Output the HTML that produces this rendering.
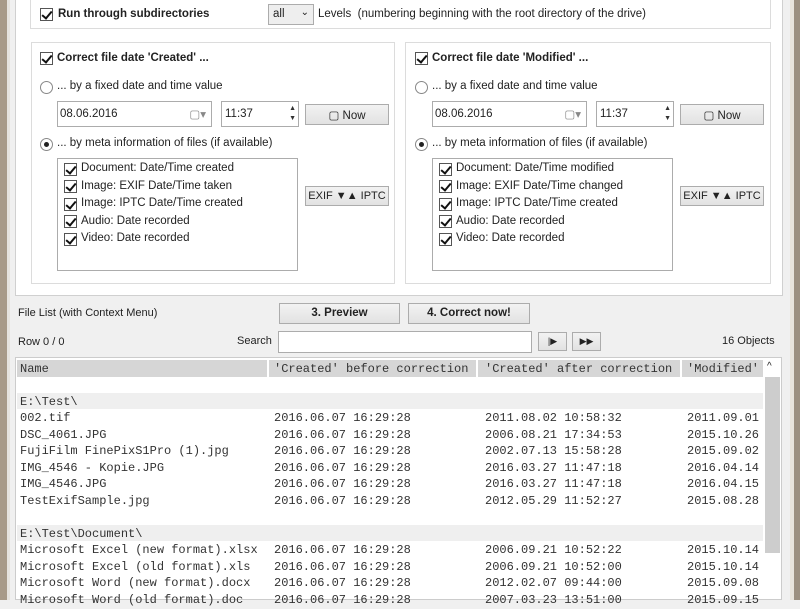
<!DOCTYPE html>
<html><head><meta charset="utf-8"><style>
*{box-sizing:border-box;margin:0;padding:0}
body{width:800px;height:600px;overflow:hidden;background:#f0f0f0;font-family:"Liberation Sans",sans-serif;font-size:11.5px;color:#222;position:relative}
.a{position:absolute;white-space:nowrap}
.box{position:absolute;border:1px solid #dcdcdc;background:#fff}
.cb{position:absolute;width:13px;height:13px;border:1px solid #555;background:#fff}
.cb:after{content:"";position:absolute;left:3px;top:0px;width:4px;height:8px;border:solid #111;border-width:0 2px 2px 0;transform:rotate(40deg)}
.rb{position:absolute;width:13px;height:13px;border:1px solid #888;border-radius:50%;background:#fff}
.rb.on:after{content:"";position:absolute;left:3px;top:3px;width:5px;height:5px;border-radius:50%;background:#222}
.in{position:absolute;border:1px solid #acacac;background:#fff;padding:4px 3px;font-size:11.5px;white-space:nowrap}
.btn{position:absolute;border:1px solid #acacac;background:linear-gradient(#f2f2f2,#e2e2e2);text-align:center;font-size:11.5px;white-space:nowrap}
.b{font-weight:bold}
.mono{font-family:"Liberation Mono",monospace;font-size:12px;color:#333}
.row{position:absolute;left:20px;height:16px;white-space:pre}
.row span{position:absolute;top:0}
</style></head><body>
<div class="a" style="left:0;top:0;width:7px;height:600px;background:#a89a88"></div>
<div class="a" style="left:7px;top:0;width:3px;height:600px;background:#e6e3de"></div>
<div class="a" style="left:790px;top:0;width:4px;height:600px;background:#e8e4dc"></div>
<div class="a" style="left:794px;top:0;width:6px;height:600px;background:#9c9080"></div>

<div class="box" style="left:15px;top:-2px;width:768px;height:298px;border-color:#d0d0d0"></div>
<div class="box" style="left:30px;top:-2px;width:741px;height:31px"></div>
<div class="cb" style="left:40px;top:8px"></div>
<div class="a b" style="left:58px;top:8px">Run through subdirectories</div>
<div class="in" style="left:268px;top:4px;width:46px;height:21px;background:#eee;padding:3px 4px">all<span style="position:absolute;right:4px;top:2px;font-size:10px">⌄</span></div>
<div class="a" style="left:318px;top:8px">Levels&nbsp; (numbering beginning with the root directory of the drive)</div>

<!-- left group -->
<div class="box" style="left:31px;top:42px;width:364px;height:242px"></div>
<div class="cb" style="left:40px;top:52px"></div>
<div class="a b" style="left:57px;top:52px">Correct file date 'Created' ...</div>
<div class="rb" style="left:40px;top:81px"></div>
<div class="a" style="left:57px;top:80px">... by a fixed date and time value</div>
<div class="in" style="left:57px;top:101px;width:155px;height:26px;padding:6px 2px">08.06.2016<span style="position:absolute;right:5px;top:5px;color:#888">▢▾</span></div>
<div class="in" style="left:221px;top:101px;width:78px;height:26px;padding:6px 3px">11:37<span style="position:absolute;right:2px;top:2px;font-size:7px;line-height:10px;color:#333">▲<br>▼</span></div>
<div class="btn" style="left:305px;top:104px;width:84px;height:21px;padding-top:3px">▢ Now</div>
<div class="rb on" style="left:40px;top:138px"></div>
<div class="a" style="left:57px;top:137px">... by meta information of files (if available)</div>
<div class="in" style="left:57px;top:158px;width:241px;height:113px;padding:0"></div>
<div class="cb" style="left:64px;top:163px"></div><div class="a" style="left:81px;top:162px">Document: Date/Time created</div>
<div class="cb" style="left:64px;top:180px"></div><div class="a" style="left:81px;top:180px">Image: EXIF Date/Time taken</div>
<div class="cb" style="left:64px;top:198px"></div><div class="a" style="left:81px;top:197px">Image: IPTC Date/Time created</div>
<div class="cb" style="left:64px;top:215px"></div><div class="a" style="left:81px;top:215px">Audio: Date recorded</div>
<div class="cb" style="left:64px;top:233px"></div><div class="a" style="left:81px;top:232px">Video: Date recorded</div>
<div class="btn" style="left:305px;top:186px;width:84px;height:20px;padding-top:3px;font-size:11px">EXIF ▼▲ IPTC</div>

<!-- right group -->
<div class="box" style="left:405px;top:42px;width:366px;height:242px"></div>
<div class="cb" style="left:415px;top:52px"></div>
<div class="a b" style="left:432px;top:52px">Correct file date 'Modified' ...</div>
<div class="rb" style="left:415px;top:81px"></div>
<div class="a" style="left:432px;top:80px">... by a fixed date and time value</div>
<div class="in" style="left:432px;top:101px;width:155px;height:26px;padding:6px 2px">08.06.2016<span style="position:absolute;right:5px;top:5px;color:#888">▢▾</span></div>
<div class="in" style="left:596px;top:101px;width:78px;height:26px;padding:6px 3px">11:37<span style="position:absolute;right:2px;top:2px;font-size:7px;line-height:10px;color:#333">▲<br>▼</span></div>
<div class="btn" style="left:680px;top:104px;width:84px;height:21px;padding-top:3px">▢ Now</div>
<div class="rb on" style="left:415px;top:138px"></div>
<div class="a" style="left:432px;top:137px">... by meta information of files (if available)</div>
<div class="in" style="left:432px;top:158px;width:241px;height:113px;padding:0"></div>
<div class="cb" style="left:439px;top:163px"></div><div class="a" style="left:456px;top:162px">Document: Date/Time modified</div>
<div class="cb" style="left:439px;top:180px"></div><div class="a" style="left:456px;top:180px">Image: EXIF Date/Time changed</div>
<div class="cb" style="left:439px;top:198px"></div><div class="a" style="left:456px;top:197px">Image: IPTC Date/Time created</div>
<div class="cb" style="left:439px;top:215px"></div><div class="a" style="left:456px;top:215px">Audio: Date recorded</div>
<div class="cb" style="left:439px;top:233px"></div><div class="a" style="left:456px;top:232px">Video: Date recorded</div>
<div class="btn" style="left:680px;top:186px;width:84px;height:20px;padding-top:3px;font-size:11px">EXIF ▼▲ IPTC</div>

<!-- list controls -->
<div class="a" style="left:18px;top:307px;font-size:11px">File List (with Context Menu)</div>
<div class="btn b" style="left:279px;top:303px;width:121px;height:21px;padding-top:3px">3. Preview</div>
<div class="btn b" style="left:408px;top:303px;width:122px;height:21px;padding-top:3px">4. Correct now!</div>
<div class="a" style="left:18px;top:336px;font-size:11px">Row 0 / 0</div>
<div class="a" style="left:237px;top:335px;font-size:11px">Search</div>
<div class="in" style="left:278px;top:331px;width:254px;height:22px"></div>
<div class="btn" style="left:538px;top:332px;width:29px;height:19px;font-size:9px;padding-top:3px">|▶</div>
<div class="btn" style="left:572px;top:332px;width:29px;height:19px;font-size:9px;padding-top:3px">▶▶</div>
<div class="a" style="left:722px;top:335px;font-size:11px">16 Objects</div>

<!-- list -->
<div class="a" style="left:15px;top:357px;width:767px;height:243px;background:#fff;border:1px solid #ccc"></div>
<div class="a" style="left:17px;top:360px;width:250px;height:17px;background:#d6d6d6"></div>
<div class="a" style="left:269px;top:360px;width:207px;height:17px;background:#d6d6d6"></div>
<div class="a" style="left:478px;top:360px;width:202px;height:17px;background:#d6d6d6"></div>
<div class="a" style="left:682px;top:360px;width:81px;height:17px;background:#d6d6d6"></div>
<div class="a" style="left:765px;top:377px;width:15px;height:176px;background:#cdcdcd"></div>
<div class="a" style="left:767px;top:361px;font-size:10px">^</div>
<div class="a" style="left:17px;top:393px;width:746px;height:16px;background:#efefef"></div>
<div class="a" style="left:17px;top:525px;width:746px;height:16px;background:#efefef"></div>
<div class="mono">
<div class="row" style="top:362px"><span style="left:0">Name</span><span style="left:254px">'Created' before correction</span><span style="left:465px">'Created' after correction</span><span style="left:667px">'Modified'</span></div>
<div class="row" style="top:395px"><span style="left:0">E:\Test\</span></div>
<div class="row" style="top:411px"><span style="left:0">002.tif</span><span style="left:254px">2016.06.07 16:29:28</span><span style="left:465px">2011.08.02 10:58:32</span><span style="left:667px">2011.09.01</span></div>
<div class="row" style="top:428px"><span style="left:0">DSC_4061.JPG</span><span style="left:254px">2016.06.07 16:29:28</span><span style="left:465px">2006.08.21 17:34:53</span><span style="left:667px">2015.10.26</span></div>
<div class="row" style="top:444px"><span style="left:0">FujiFilm FinePixS1Pro (1).jpg</span><span style="left:254px">2016.06.07 16:29:28</span><span style="left:465px">2002.07.13 15:58:28</span><span style="left:667px">2015.09.02</span></div>
<div class="row" style="top:461px"><span style="left:0">IMG_4546 - Kopie.JPG</span><span style="left:254px">2016.06.07 16:29:28</span><span style="left:465px">2016.03.27 11:47:18</span><span style="left:667px">2016.04.14</span></div>
<div class="row" style="top:477px"><span style="left:0">IMG_4546.JPG</span><span style="left:254px">2016.06.07 16:29:28</span><span style="left:465px">2016.03.27 11:47:18</span><span style="left:667px">2016.04.15</span></div>
<div class="row" style="top:494px"><span style="left:0">TestExifSample.jpg</span><span style="left:254px">2016.06.07 16:29:28</span><span style="left:465px">2012.05.29 11:52:27</span><span style="left:667px">2015.08.28</span></div>
<div class="row" style="top:527px"><span style="left:0">E:\Test\Document\</span></div>
<div class="row" style="top:543px"><span style="left:0">Microsoft Excel (new format).xlsx</span><span style="left:254px">2016.06.07 16:29:28</span><span style="left:465px">2006.09.21 10:52:22</span><span style="left:667px">2015.10.14</span></div>
<div class="row" style="top:560px"><span style="left:0">Microsoft Excel (old format).xls</span><span style="left:254px">2016.06.07 16:29:28</span><span style="left:465px">2006.09.21 10:52:00</span><span style="left:667px">2015.10.14</span></div>
<div class="row" style="top:576px"><span style="left:0">Microsoft Word (new format).docx</span><span style="left:254px">2016.06.07 16:29:28</span><span style="left:465px">2012.02.07 09:44:00</span><span style="left:667px">2015.09.08</span></div>
<div class="row" style="top:593px"><span style="left:0">Microsoft Word (old format).doc</span><span style="left:254px">2016.06.07 16:29:28</span><span style="left:465px">2007.03.23 13:51:00</span><span style="left:667px">2015.09.15</span></div>
</div>
</body></html>
